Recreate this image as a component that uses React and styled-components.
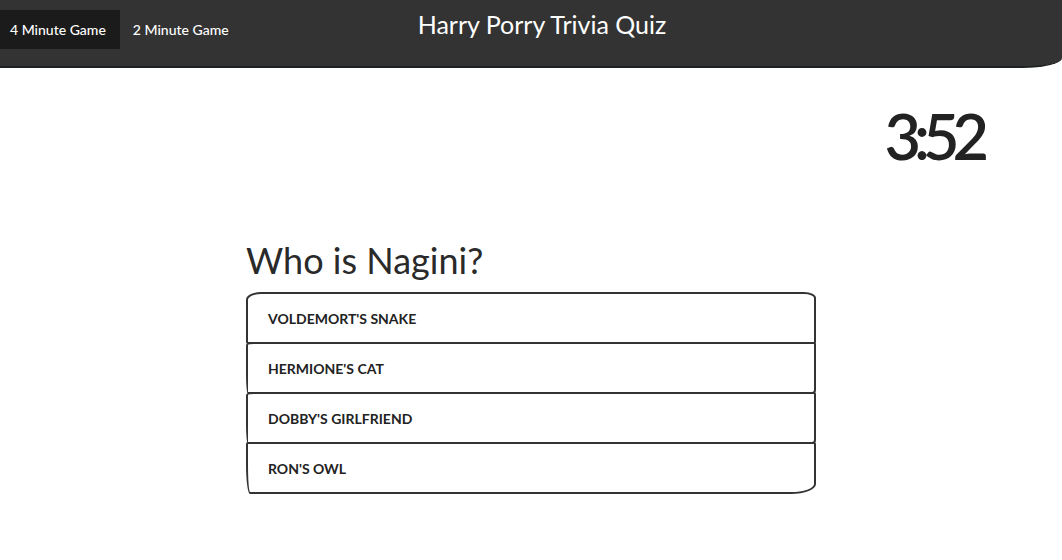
import React from "react";
import styled, { createGlobalStyle } from "styled-components";

const GlobalStyle = createGlobalStyle`
  body {
    margin: 0;
    background: #fff;
    font-family: Lato, "Open Sans", sans-serif;
    color: #282828;
  }
`;

const Header = styled.header`
  position: relative;
  display: flex;
  align-items: center;
  height: 66px;
  background: #333;
  border-bottom: 2px solid #1f2224;
  border-bottom-right-radius: 40px 10px;
`;

const Tabs = styled.nav`
  display: flex;
  align-self: flex-start;
  margin-top: 10px;
`;

const Tab = styled.button`
  height: 39px;
  padding: 0 ${(p) => (p.active ? "14px 0 10px" : "13px 0 13px")};
  border: none;
  background: ${(p) => (p.active ? "#1b1b1b" : "transparent")};
  color: #fff;
  font-family: Lato, "Open Sans", sans-serif;
  font-size: 14px;
  font-weight: 500;
  cursor: pointer;
`;

const Title = styled.h1`
  position: absolute;
  left: 0;
  right: 0;
  top: 9px;
  margin: 0;
  padding-left: 22px;
  text-align: center;
  color: #fff;
  font-size: 25px;
  font-weight: 400;
  pointer-events: none;
`;

const Main = styled.main`
  display: flex;
  flex-direction: column;
`;

const Timer = styled.div`
  align-self: flex-end;
  margin: 28px 80px 0 0;
  font-size: 63px;
  font-weight: 600;
  line-height: 80px;
  letter-spacing: -7px;
  color: #222;
`;

const Quiz = styled.section`
  width: 570px;
  margin: 62px auto 0;
`;

const Question = styled.h2`
  margin: 0 0 10px;
  font-size: 36px;
  font-weight: 400;
  color: #2a2a2a;
`;

const Answers = styled.ul`
  list-style: none;
  margin: 0;
  padding: 0;
`;

const Answer = styled.li`
  display: flex;
  align-items: center;
  height: 52px;
  box-sizing: border-box;
  margin-top: -2px;
  padding: 0 20px;
  border: 2px solid #333;
  border-radius: ${(p) =>
    p.first
      ? "15px 12px 2px 2px / 8px 6px 2px 2px"
      : p.last
      ? "2px 2px 25px 4px / 2px 2px 10px 30px"
      : "8px 2px 4px 2px / 3px 2px 4px 20px"};
  font-size: 14px;
  font-weight: 700;
  text-transform: uppercase;
  color: #222;
  cursor: pointer;
  &:first-child {
    margin-top: 0;
  }
`;

const answers = ["Voldemort's Snake", "Hermione's Cat", "Dobby's Girlfriend", "Ron's Owl"];

export default function App() {
  return (
    <>
      <GlobalStyle />
      <Header>
        <Tabs>
          <Tab active>4 Minute Game</Tab>
          <Tab>2 Minute Game</Tab>
        </Tabs>
        <Title>Harry Porry Trivia Quiz</Title>
      </Header>
      <Main>
        <Timer>3:52</Timer>
        <Quiz>
          <Question>Who is Nagini?</Question>
          <Answers>
            {answers.map((a, i) => (
              <Answer key={a} first={i === 0} last={i === answers.length - 1}>
                {a}
              </Answer>
            ))}
          </Answers>
        </Quiz>
      </Main>
    </>
  );
}
